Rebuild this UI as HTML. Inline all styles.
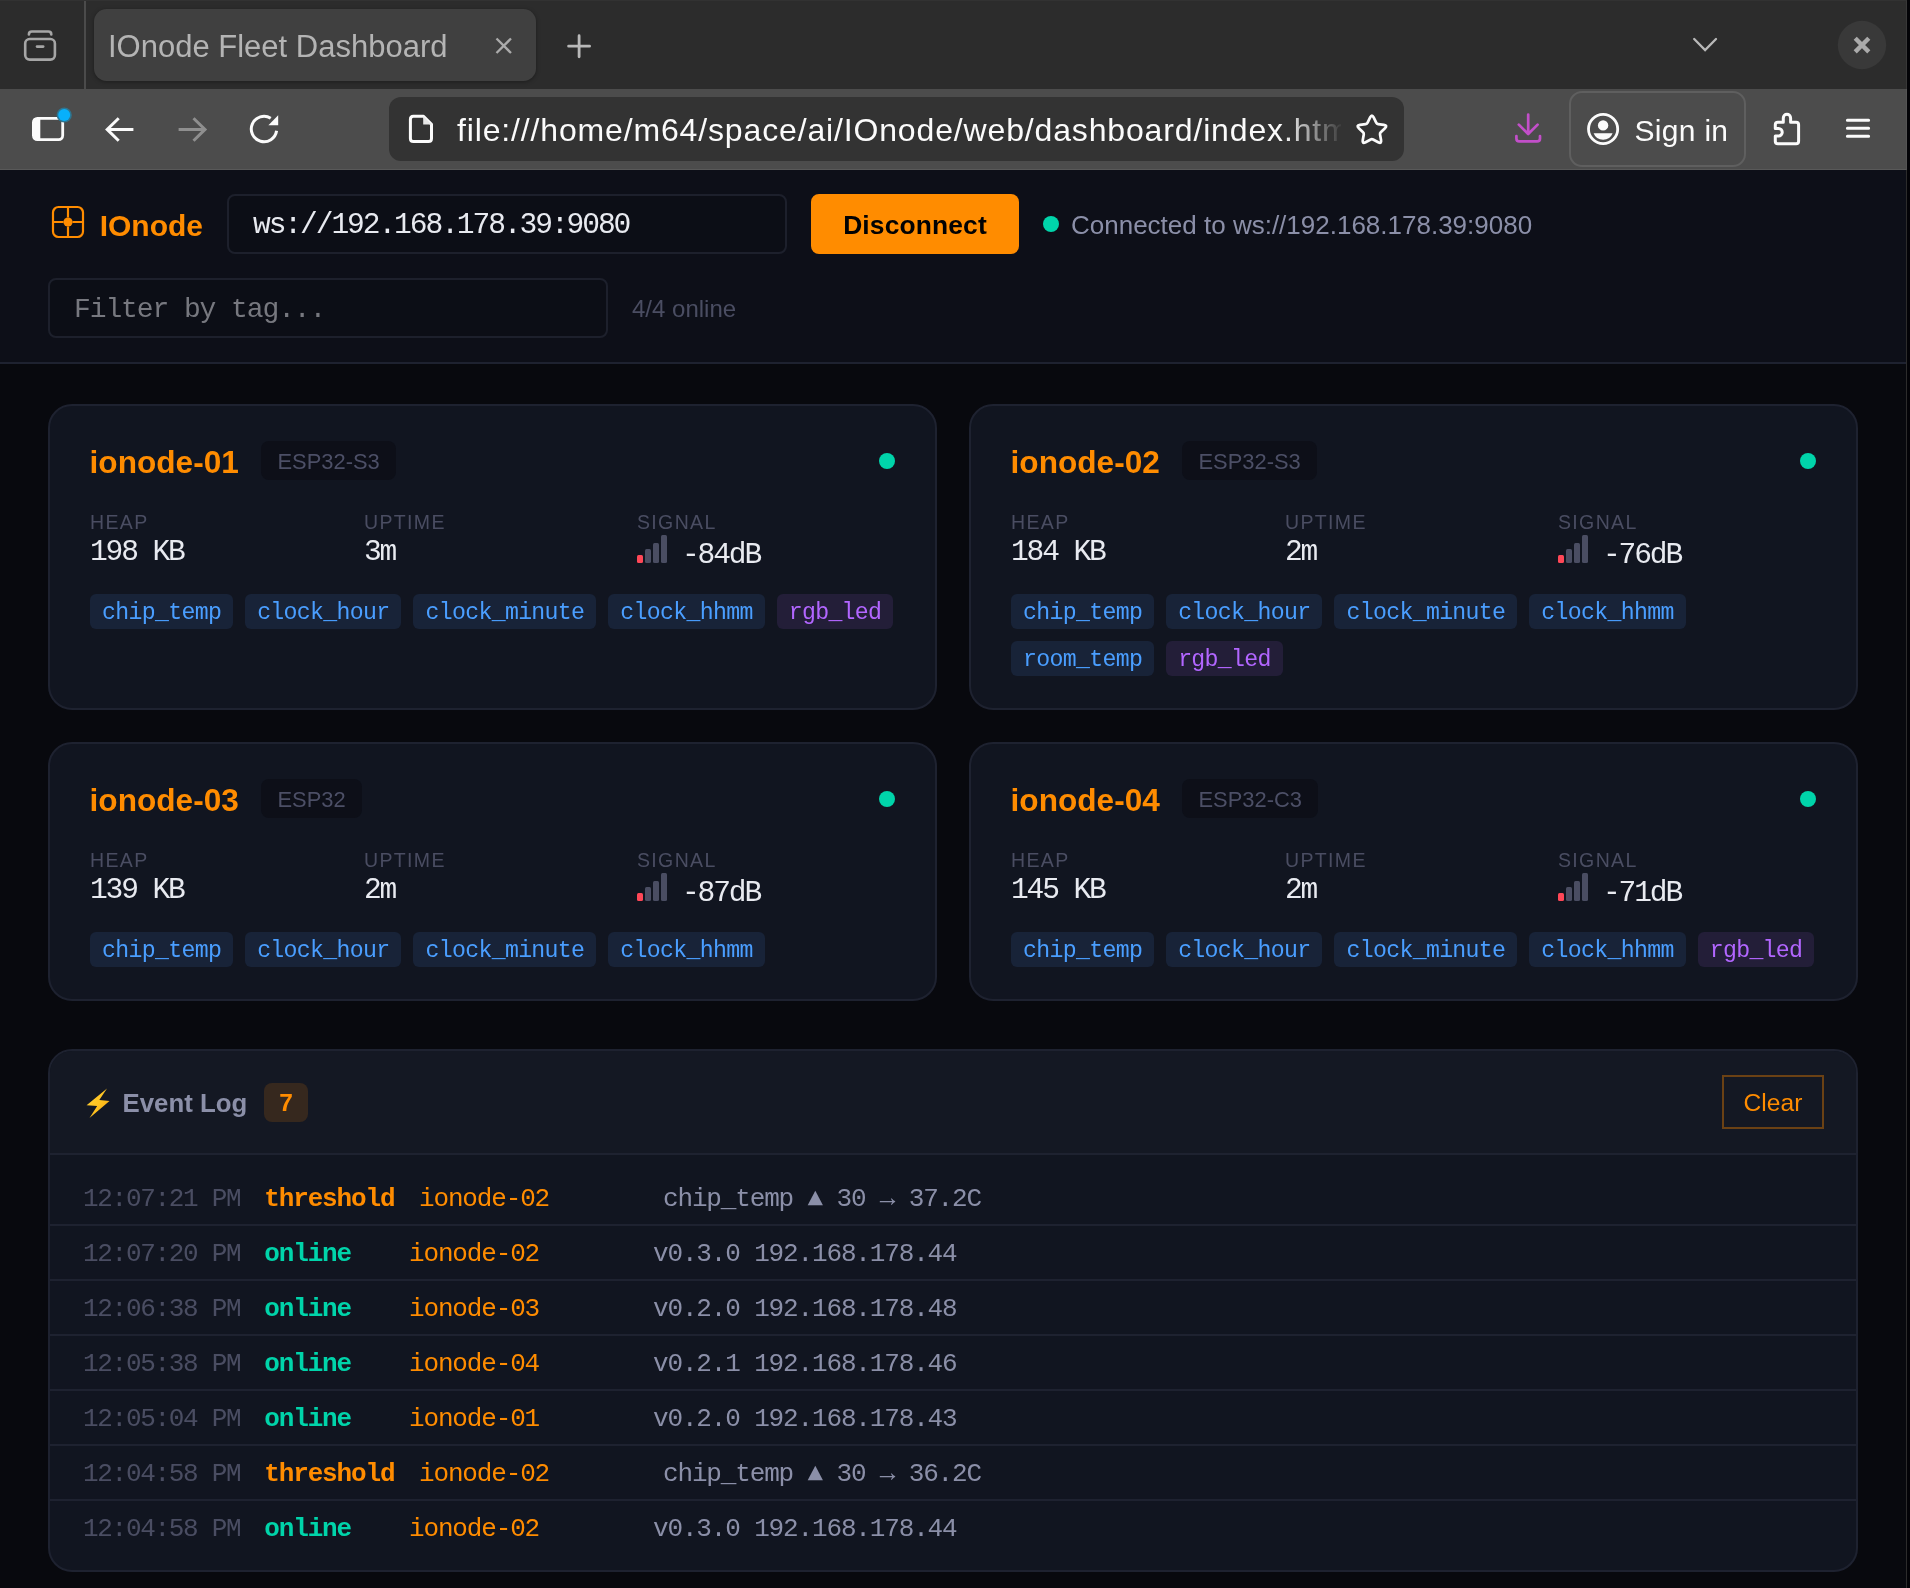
<!DOCTYPE html>
<html><head><meta charset="utf-8"><title>IOnode Fleet Dashboard</title>
<style>
*{box-sizing:border-box;margin:0;padding:0}
html,body{width:1910px;height:1588px;overflow:hidden;background:#08090e}
body{position:relative;font-family:"Liberation Sans",sans-serif;color:#e8eaf0}
.abs{position:absolute}
.mono{font-family:"Liberation Mono",monospace}
/* ---------- browser chrome ---------- */
#tabbar{position:absolute;left:0;top:0;width:1907px;height:89px;background:#2c2c2c;border-right:1px solid #383838;border-top:1px solid #323232}
#toolbar{position:absolute;left:0;top:89px;width:1907px;height:81px;background:#4c4c4c;border-right:1px solid #545454;border-bottom:1px solid #595959}
#edge{position:absolute;left:1906px;top:170px;width:4px;height:1418px;background:#030307;border-left:1px solid #2c2c2c}
#edge2{position:absolute;left:1907px;top:0;width:3px;height:170px;background:#030307}
#tab{position:absolute;left:94px;top:9px;width:442px;height:71.5px;border-radius:12.5px;background:#404040;box-shadow:0 1px 4px rgba(0,0,0,.35)}
#tabtitle{position:absolute;left:108px;top:29px;font-size:31px;line-height:36px;color:#b4b4b4;white-space:nowrap}
#urlbar{position:absolute;left:389px;top:97px;width:1015px;height:64px;border-radius:12px;background:#333333}
#urltext{position:absolute;left:457px;top:111px;width:884px;height:40px;overflow:hidden;font-size:32px;letter-spacing:.85px;line-height:38px;color:#fbfbfb;white-space:nowrap}
#signin{position:absolute;left:1569px;top:91px;width:177px;height:76px;border:2px solid #5f5f5f;border-radius:13px}
#signintext{position:absolute;left:1634.5px;top:112.5px;letter-spacing:.3px;font-size:30px;line-height:36px;color:#fbfbfb;white-space:nowrap}
/* ---------- page ---------- */
#hdr{position:absolute;left:0;top:170px;width:1906px;height:194px;background:#0d0f18;border-bottom:2px solid #1e2230}
.logo{position:absolute;left:99.7px;top:208px;font-size:30px;line-height:36px;font-weight:bold;color:#ff8c00;white-space:nowrap}
.inp{position:absolute;border:2px solid #1d202c;border-radius:8px;background:#0c0e16;font-size:28px;letter-spacing:-1.1px;line-height:30px;white-space:nowrap;padding:14.5px 0 0 24px}
#btn{position:absolute;left:811px;top:194px;width:208px;height:60px;border-radius:8px;background:#ff8c00;color:#020203;font-weight:bold;font-size:26.4px;letter-spacing:.15px;line-height:62px;text-align:center}
.dot{position:absolute;width:16px;height:16px;border-radius:50%;background:#00d4aa}
#status{position:absolute;left:1071px;top:210px;font-size:26px;line-height:30px;color:#8b8fa8;white-space:nowrap}
#count{position:absolute;left:632px;top:295px;font-size:24px;line-height:28px;color:#4a4d62;white-space:nowrap}
.card{position:absolute;width:889px;border:2px solid #1e2230;border-radius:24px;background:#111520}
.card h3{position:absolute;left:39.6px;top:37px;font-size:31.6px;line-height:38px;font-weight:bold;color:#ff8c00;white-space:nowrap}
.chip{position:absolute;left:211px;top:35px;height:39px;padding:0 16.5px;border-radius:8px;background:#0d0f18;color:#4c4f66;font-size:21.9px;line-height:42px;white-space:nowrap}
.lbl{position:absolute;top:103.5px;font-size:19.5px;line-height:24px;letter-spacing:1.35px;color:#4a4d62;white-space:nowrap}
.val{position:absolute;top:130px;font-size:29.6px;letter-spacing:-2.15px;line-height:32px;color:#e8eaf0;white-space:nowrap;font-family:"Liberation Mono",monospace}
.bars{position:absolute;left:587px;top:129px;width:30px;height:28px}
.bars i{position:absolute;bottom:0;width:6px;border-radius:1.5px;background:#4a4d62}
.tags{position:absolute;left:40px;top:188px;width:820px;display:flex;flex-wrap:wrap;gap:12px 12px}
.tag{height:35px;padding:0 12px;border-radius:6px;background:#182338;color:#4a9eff;font-family:"Liberation Mono",monospace;font-size:23.2px;letter-spacing:-.68px;line-height:38.6px;white-space:nowrap}
.tag.p{background:#231e38;color:#b266ff}
#log{position:absolute;left:48px;top:1049px;width:1810px;height:523px;border:2px solid #1e2230;border-radius:24px;background:#111520;overflow:hidden}
#loghdr{position:absolute;left:0;top:0;width:100%;height:104px;background:#141823;border-bottom:2px solid #1e2230}
.row{position:absolute;left:0;width:100%;height:55px;border-bottom:2px solid #1e2230;font-family:"Liberation Mono",monospace;font-size:26px;letter-spacing:-1.15px;line-height:30px;white-space:nowrap}
.row span{position:absolute;top:13px}
.t{left:33px;color:#4a4d62;letter-spacing:-1.3px}
.ty{left:214.3px;font-weight:bold}
.th{color:#ff8c00}.on{color:#00d4aa}
.nd{color:#ff8c00}
.ms{color:#8b8fa8}
#root{position:absolute;left:0;top:0;width:1910px;height:1588px;will-change:transform}
</style></head><body><div id="root">
<div id="tabbar"></div>
<div id="toolbar"></div>
<div id="edge"></div><div id="edge2"></div>
<div id="tab"></div>
<div id="tabtitle">IOnode Fleet Dashboard</div>
<div id="urlbar"></div>
<div id="urltext">file:///home/m64/space/ai/IOnode/web/dashboard/index.htm</div>
<div class="abs" style="left:1283px;top:100px;width:58px;height:58px;background:linear-gradient(to right,rgba(51,51,51,0),rgba(51,51,51,.95))"></div>
<div id="signin"></div>
<div id="signintext">Sign in</div>
<svg class="abs" style="left:20px;top:26px" width="40" height="40" viewBox="20 26 40 40" ><g fill="none" stroke="#a6a6a6" stroke-width="2.6" stroke-linecap="round"><path d="M28.9,34.4 Q28.9,31.5 31.8,31.5 L48.4,31.5 Q51.3,31.5 51.3,34.4"/><rect x="25.2" y="39" width="29.7" height="20.6" rx="4.5"/><path d="M37,46.6 L43.2,46.6"/></g></svg>
<div class="abs" style="left:84px;top:1px;width:2px;height:88px;background:#4b4b4b"></div>
<svg class="abs" style="left:490px;top:32px" width="28" height="28" viewBox="490 32 28 28" ><path d="M496.5,38.5 L511,53 M511,38.5 L496.5,53" stroke="#ababab" stroke-width="2.3" fill="none"/></svg>
<svg class="abs" style="left:562px;top:30px" width="34" height="34" viewBox="562 30 34 34" ><path d="M568.6,46.2 L589.6,46.2 M579.1,35.7 L579.1,56.8" stroke="#b9b9b9" stroke-width="2.8" stroke-linecap="round" fill="none"/></svg>
<svg class="abs" style="left:1688px;top:32px" width="36" height="26" viewBox="1688 32 36 26" ><path d="M1694.2,39 L1705.1,50 L1716,39" stroke="#b9b9b9" stroke-width="2.3" stroke-linecap="round" fill="none"/></svg>
<svg class="abs" style="left:1834px;top:18px" width="56" height="56" viewBox="1834 18 56 56" ><circle cx="1862" cy="45" r="24.2" fill="#393939"/><path d="M1855.2,38.3 L1868.8,51.9 M1868.8,38.3 L1855.2,51.9" stroke="#aaaaaa" stroke-width="4.4" fill="none"/></svg>
<svg class="abs" style="left:28px;top:104px" width="48" height="44" viewBox="28 104 48 44" ><rect x="33.4" y="118.3" width="29.3" height="21.3" rx="4" fill="none" stroke="#fbfbfb" stroke-width="2.8"/><path d="M36,118 L40.3,118 L40.3,140 L36,140 Q33,140 33,137 L33,121 Q33,118 36,118 Z" fill="#fbfbfb"/><circle cx="64.2" cy="115" r="7.6" fill="#2e7590"/><circle cx="64.2" cy="115" r="6" fill="#08b0fb"/></svg>
<svg class="abs" style="left:100px;top:112px" width="40" height="36" viewBox="100 112 40 36" ><path d="M133.4,129.4 L108,129.4 M118.7,118.2 L107.2,129.4 L118.7,140.7" stroke="#fbfbfb" stroke-width="3" fill="none"/></svg>
<svg class="abs" style="left:172px;top:112px" width="40" height="36" viewBox="172 112 40 36" ><path d="M178.6,129.4 L204,129.4 M193.5,118.2 L205,129.4 L193.5,140.7" stroke="#8f8f8f" stroke-width="3" fill="none"/></svg>
<svg class="abs" style="left:244px;top:108px" width="40" height="42" viewBox="244 108 40 42" ><path d="M276.58,130.77 A12.7,12.7 0 1 1 270.73,118.23" stroke="#fbfbfb" stroke-width="3" fill="none"/><path d="M278.2,115.3 L278.2,125.3 L268.4,125.3 Z" fill="#fbfbfb"/></svg>
<svg class="abs" style="left:404px;top:110px" width="34" height="38" viewBox="404 110 34 38" ><path d="M413.4,116.3 L423.5,116.3 L431.5,124.3 L431.5,138.6 Q431.5,141.6 428.5,141.6 L413.4,141.6 Q410.4,141.6 410.4,138.6 L410.4,119.3 Q410.4,116.3 413.4,116.3 Z" fill="none" stroke="#fbfbfb" stroke-width="3" stroke-linejoin="round"/><path d="M423.2,116 L423.2,124.6 L431.8,124.6 Z" fill="#e6e6e6"/></svg>
<svg class="abs" style="left:1352px;top:110px" width="40" height="40" viewBox="1352 110 40 40" ><path d="M1370.14,117.43 Q1371.90,113.80 1373.66,117.43 L1376.19,122.67 Q1376.78,123.89 1378.11,124.07 L1383.88,124.86 Q1387.88,125.41 1384.97,128.20 L1380.76,132.23 Q1379.79,133.16 1380.03,134.49 L1381.06,140.22 Q1381.77,144.19 1378.22,142.29 L1373.08,139.53 Q1371.90,138.90 1370.72,139.53 L1365.58,142.29 Q1362.03,144.19 1362.74,140.22 L1363.77,134.49 Q1364.01,133.16 1363.04,132.23 L1358.83,128.20 Q1355.92,125.41 1359.92,124.86 L1365.69,124.07 Q1367.02,123.89 1367.61,122.67 Z" fill="none" stroke="#fbfbfb" stroke-width="2.7" stroke-linejoin="round"/></svg>
<svg class="abs" style="left:1510px;top:108px" width="38" height="40" viewBox="1510 108 38 40" ><g fill="none" stroke="#c24fc9" stroke-width="2.7" stroke-linecap="round" stroke-linejoin="round"><path d="M1528.2,114.5 L1528.2,133.5 M1518.8,124.6 L1528.2,134 L1537.6,124.6"/><path d="M1516.4,136 L1516.4,138.4 Q1516.4,141.4 1519.4,141.4 L1537,141.4 Q1540,141.4 1540,138.4 L1540,136"/></g></svg>
<svg class="abs" style="left:1584px;top:110px" width="38" height="38" viewBox="1584 110 38 38" ><circle cx="1603.1" cy="129" r="14.6" fill="none" stroke="#fbfbfb" stroke-width="2.8"/><circle cx="1603.1" cy="125.4" r="5.2" fill="#fbfbfb"/><path d="M1593.6,133.2 L1612.6,133.2 A10.2,10.2 0 0 1 1593.6,133.2 Z" fill="#fbfbfb"/></svg>
<svg class="abs" style="left:1770px;top:108px" width="34" height="42" viewBox="1770 108 34 42" ><path d="M1777.8,122.2 L1783.3,122.2 L1783.3,117.9 A3.65,3.65 0 0 1 1790.6,117.9 L1790.6,122.2 L1796.1,122.2 Q1798.6,122.2 1798.6,124.7 L1798.6,141.2 Q1798.6,143.7 1796.1,143.7 L1777.8,143.7 Q1775.3,143.7 1775.3,141.2 L1775.3,136 L1778.5,136 A3.75,3.75 0 0 0 1778.5,128.5 L1775.3,128.5 L1775.3,124.7 Q1775.3,122.2 1777.8,122.2 Z" fill="none" stroke="#fbfbfb" stroke-width="3" stroke-linejoin="round"/></svg>
<svg class="abs" style="left:1842px;top:114px" width="32" height="30" viewBox="1842 114 32 30" ><path d="M1847.4,120.3 L1868.6,120.3 M1847.4,128.3 L1868.6,128.3 M1847.4,136.3 L1868.6,136.3" stroke="#fbfbfb" stroke-width="3" stroke-linecap="round" fill="none"/></svg>
<div id="hdr"></div>
<svg class="abs" style="left:48px;top:202px" width="40" height="40" viewBox="48 202 40 40" ><g fill="none" stroke="#ff8c00" stroke-width="2.2"><rect x="53" y="207" width="30" height="30" rx="5.5"/><path d="M68,207 L68,217.5 M68,226.5 L68,237 M53,222 L63.5,222 M72.5,222 L83,222"/></g><circle cx="68" cy="222" r="4.6" fill="#ff8c00"/></svg>
<div class="logo">IOnode</div>
<div class="inp mono" style="left:227px;top:194px;width:560px;height:60px;color:#e8eaf0;font-size:29.6px;letter-spacing:-2.08px;padding-top:13.5px">ws://192.168.178.39:9080</div>
<div id="btn">Disconnect</div>
<div class="dot" style="left:1043px;top:216px"></div>
<div id="status">Connected to ws://192.168.178.39:9080</div>
<div class="inp mono" style="left:48px;top:278px;width:560px;height:60px;color:#77787f">Filter by tag...</div>
<div id="count">4/4 online</div>
<div class="card" style="left:48px;top:404px;height:306px">
<h3>ionode-01</h3><div class="chip">ESP32-S3</div><div class="dot" style="left:829px;top:47px"></div>
<div class="lbl" style="left:40px">HEAP</div><div class="val" style="left:40px">198 KB</div>
<div class="lbl" style="left:314px">UPTIME</div><div class="val" style="left:314px">3m</div>
<div class="lbl" style="left:587px">SIGNAL</div>
<div class="bars"><i style="left:0;height:8px;background:#ff4757"></i><i style="left:8px;height:14px"></i><i style="left:16px;height:20px"></i><i style="left:24px;height:28px"></i></div>
<div class="val" style="left:632px;top:133px">-84dB</div>
<div class="tags"><span class="tag">chip_temp</span><span class="tag">clock_hour</span><span class="tag">clock_minute</span><span class="tag">clock_hhmm</span><span class="tag p">rgb_led</span></div>
</div>
<div class="card" style="left:969px;top:404px;height:306px">
<h3>ionode-02</h3><div class="chip">ESP32-S3</div><div class="dot" style="left:829px;top:47px"></div>
<div class="lbl" style="left:40px">HEAP</div><div class="val" style="left:40px">184 KB</div>
<div class="lbl" style="left:314px">UPTIME</div><div class="val" style="left:314px">2m</div>
<div class="lbl" style="left:587px">SIGNAL</div>
<div class="bars"><i style="left:0;height:8px;background:#ff4757"></i><i style="left:8px;height:14px"></i><i style="left:16px;height:20px"></i><i style="left:24px;height:28px"></i></div>
<div class="val" style="left:632px;top:133px">-76dB</div>
<div class="tags"><span class="tag">chip_temp</span><span class="tag">clock_hour</span><span class="tag">clock_minute</span><span class="tag">clock_hhmm</span><span class="tag">room_temp</span><span class="tag p">rgb_led</span></div>
</div>
<div class="card" style="left:48px;top:742px;height:259px">
<h3>ionode-03</h3><div class="chip">ESP32</div><div class="dot" style="left:829px;top:47px"></div>
<div class="lbl" style="left:40px">HEAP</div><div class="val" style="left:40px">139 KB</div>
<div class="lbl" style="left:314px">UPTIME</div><div class="val" style="left:314px">2m</div>
<div class="lbl" style="left:587px">SIGNAL</div>
<div class="bars"><i style="left:0;height:8px;background:#ff4757"></i><i style="left:8px;height:14px"></i><i style="left:16px;height:20px"></i><i style="left:24px;height:28px"></i></div>
<div class="val" style="left:632px;top:133px">-87dB</div>
<div class="tags"><span class="tag">chip_temp</span><span class="tag">clock_hour</span><span class="tag">clock_minute</span><span class="tag">clock_hhmm</span></div>
</div>
<div class="card" style="left:969px;top:742px;height:259px">
<h3>ionode-04</h3><div class="chip">ESP32-C3</div><div class="dot" style="left:829px;top:47px"></div>
<div class="lbl" style="left:40px">HEAP</div><div class="val" style="left:40px">145 KB</div>
<div class="lbl" style="left:314px">UPTIME</div><div class="val" style="left:314px">2m</div>
<div class="lbl" style="left:587px">SIGNAL</div>
<div class="bars"><i style="left:0;height:8px;background:#ff4757"></i><i style="left:8px;height:14px"></i><i style="left:16px;height:20px"></i><i style="left:24px;height:28px"></i></div>
<div class="val" style="left:632px;top:133px">-71dB</div>
<div class="tags"><span class="tag">chip_temp</span><span class="tag">clock_hour</span><span class="tag">clock_minute</span><span class="tag">clock_hhmm</span><span class="tag p">rgb_led</span></div>
</div>
<div id="log"><div id="loghdr">
<svg class="abs" style="left:30px;top:30px" width="40" height="44" viewBox="30 30 40 44"><defs><linearGradient id="bg" x1="0" y1="0" x2="1" y2="1"><stop offset="0" stop-color="#ffd23a"/><stop offset="0.55" stop-color="#ffc21f"/><stop offset="1" stop-color="#f59a0c"/></linearGradient></defs><polygon points="57.0,37.6 36.6,54.2 47.2,55.0 39.5,67.0 59.5,49.9 49.3,48.9" fill="url(#bg)"/></svg>
<div class="abs" style="left:72.5px;top:37px;font-size:25.8px;line-height:30px;font-weight:bold;color:#8b8fa8;white-space:nowrap">Event Log</div>
<div class="abs" style="left:214px;top:32px;width:44px;height:39px;border-radius:8px;background:#36281e;color:#ff8c00;font-weight:bold;font-size:24.5px;line-height:40px;text-align:center">7</div>
<div class="abs" style="left:1672px;top:24px;width:102px;height:54px;border:2px solid #6b4114;color:#ff8c00;font-size:24.6px;line-height:51px;text-align:center">Clear</div>
</div>
<div class="row" style="top:120px"><span class="t">12:07:21 PM</span><span class="ty th">threshold</span><span class="nd" style="left:369px">ionode-02</span><span class="ms" style="left:613px">chip_temp ▲ 30 → 37.2C</span></div>
<div class="row" style="top:175px"><span class="t">12:07:20 PM</span><span class="ty on">online</span><span class="nd" style="left:359px">ionode-02</span><span class="ms" style="left:603px">v0.3.0 192.168.178.44</span></div>
<div class="row" style="top:230px"><span class="t">12:06:38 PM</span><span class="ty on">online</span><span class="nd" style="left:359px">ionode-03</span><span class="ms" style="left:603px">v0.2.0 192.168.178.48</span></div>
<div class="row" style="top:285px"><span class="t">12:05:38 PM</span><span class="ty on">online</span><span class="nd" style="left:359px">ionode-04</span><span class="ms" style="left:603px">v0.2.1 192.168.178.46</span></div>
<div class="row" style="top:340px"><span class="t">12:05:04 PM</span><span class="ty on">online</span><span class="nd" style="left:359px">ionode-01</span><span class="ms" style="left:603px">v0.2.0 192.168.178.43</span></div>
<div class="row" style="top:395px"><span class="t">12:04:58 PM</span><span class="ty th">threshold</span><span class="nd" style="left:369px">ionode-02</span><span class="ms" style="left:613px">chip_temp ▲ 30 → 36.2C</span></div>
<div class="row" style="top:450px;border-bottom:none"><span class="t">12:04:58 PM</span><span class="ty on">online</span><span class="nd" style="left:359px">ionode-02</span><span class="ms" style="left:603px">v0.3.0 192.168.178.44</span></div>
</div>
</div></body></html>
